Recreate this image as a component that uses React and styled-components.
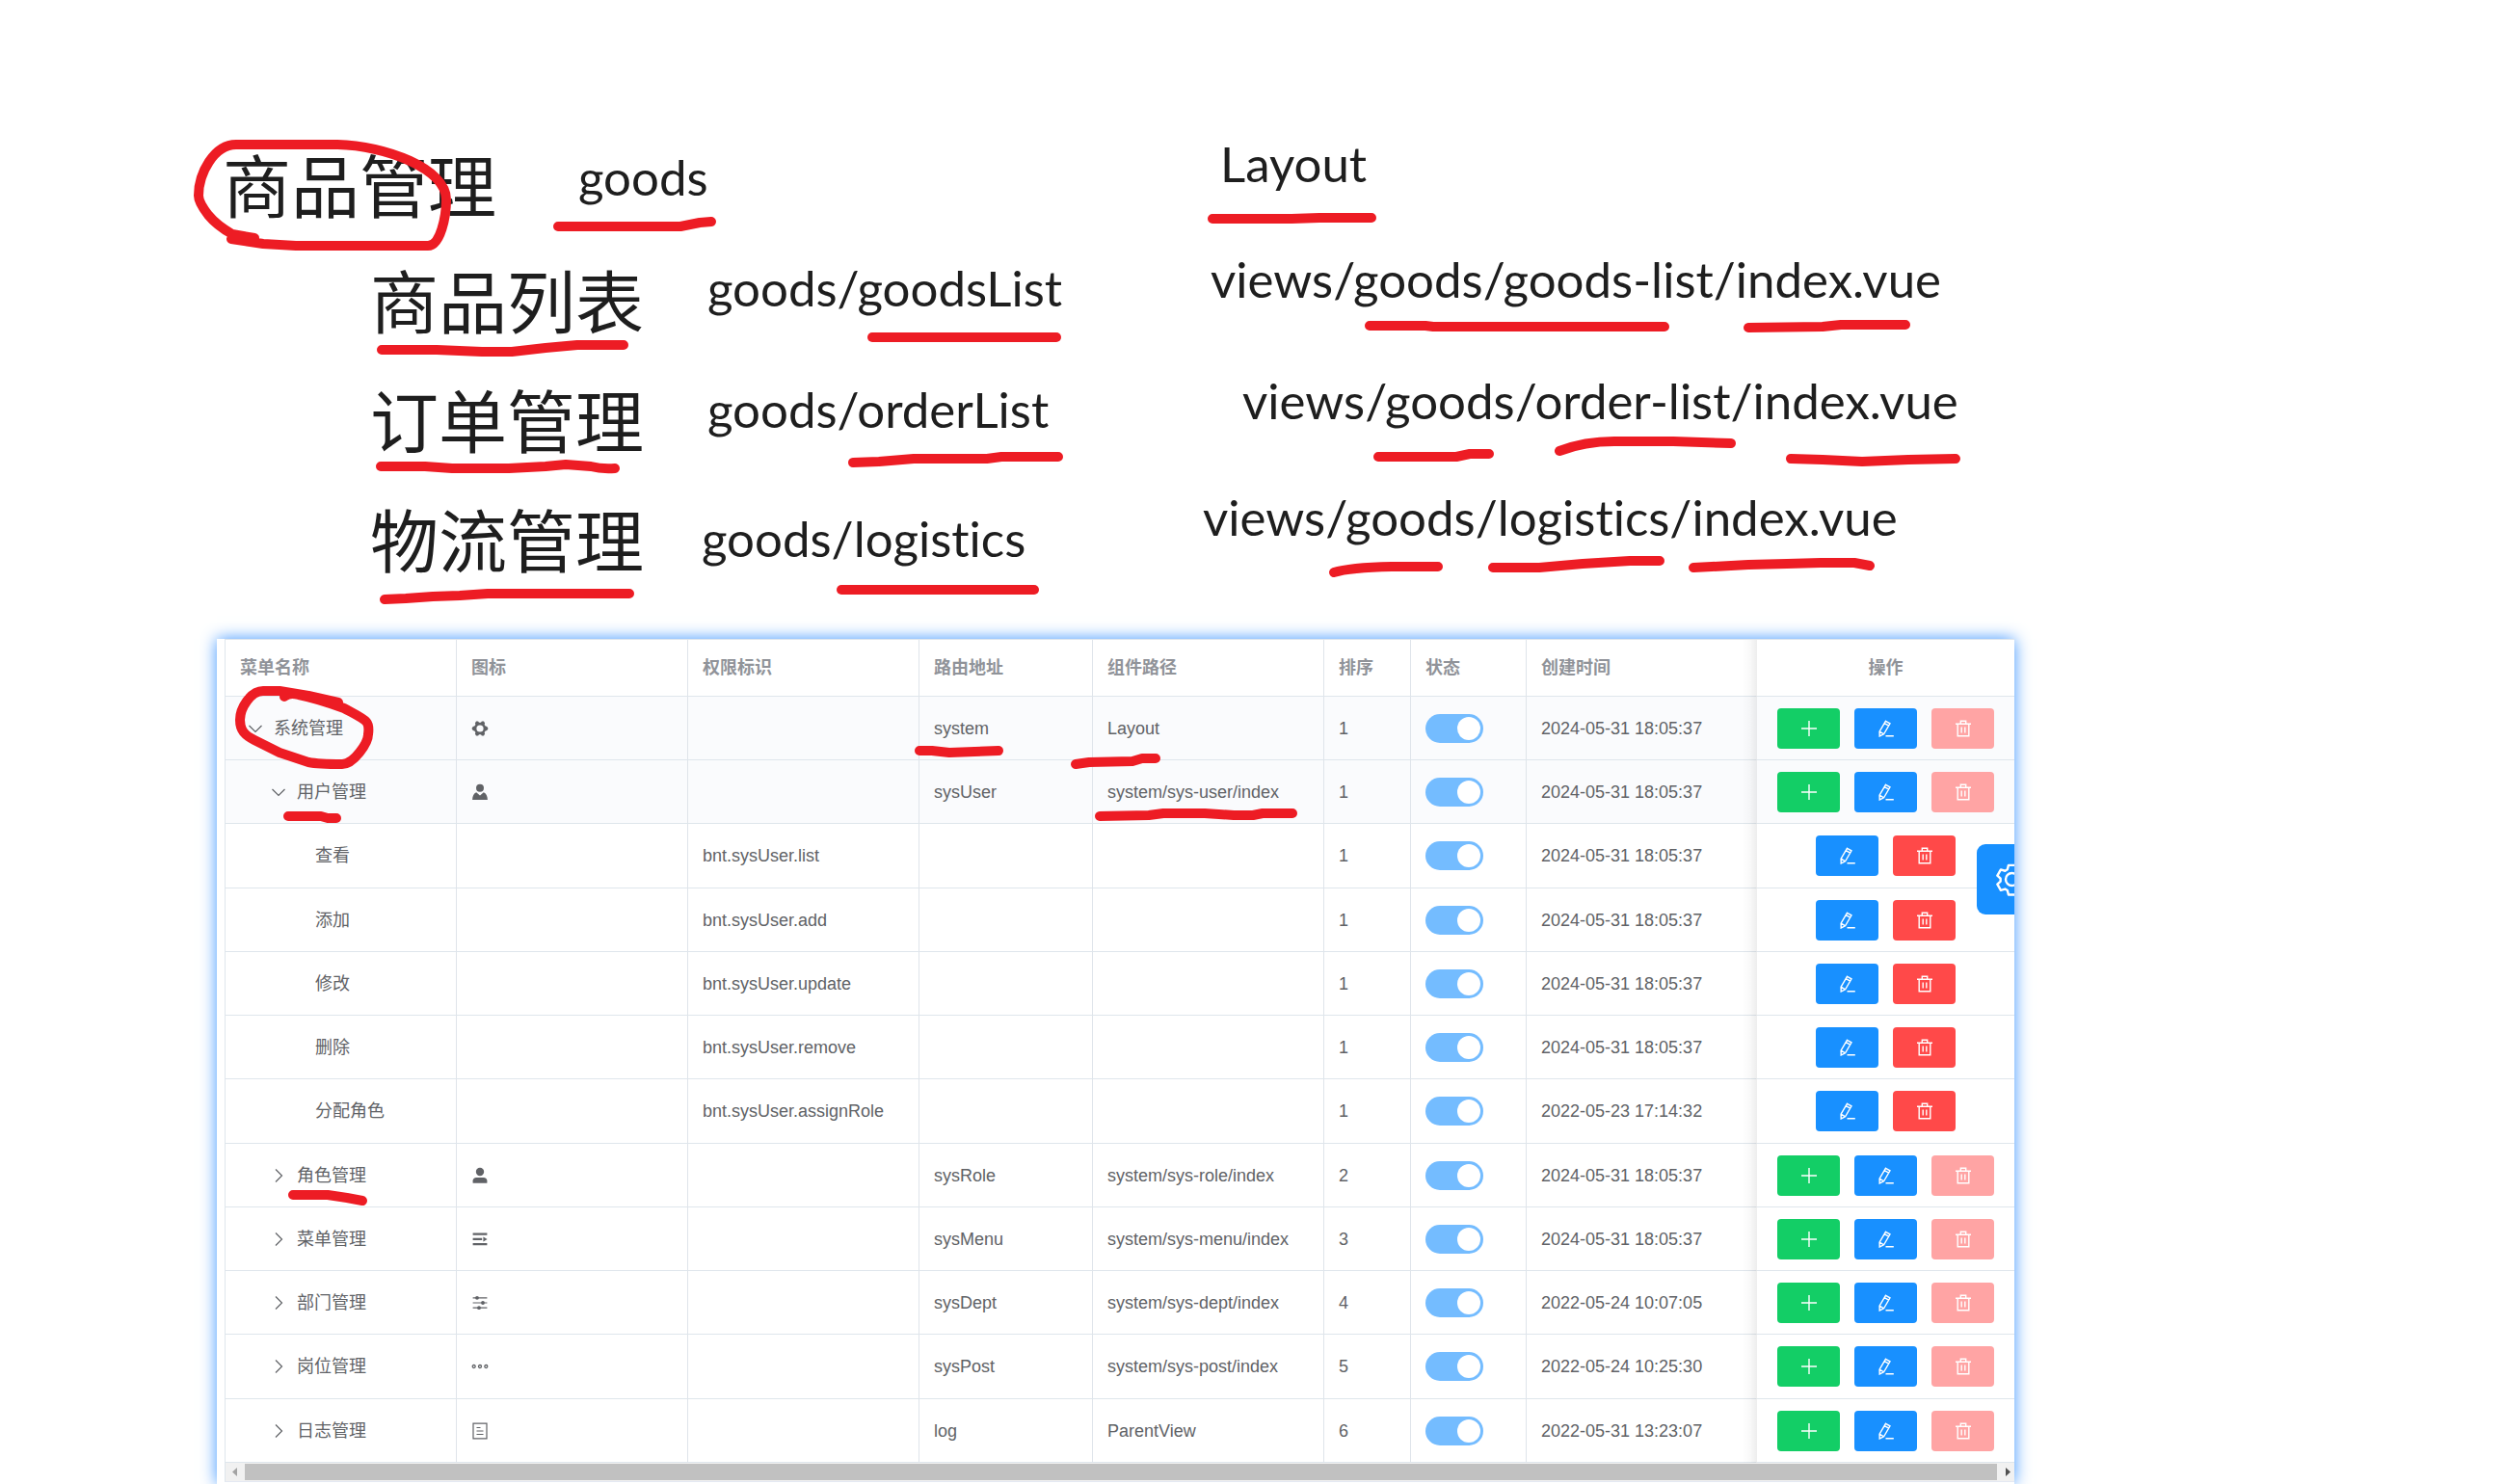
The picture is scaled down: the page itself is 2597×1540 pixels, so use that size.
import React from "react";
import styled, { createGlobalStyle, css } from "styled-components";

const Global = createGlobalStyle`
  *, *::before, *::after { box-sizing: border-box; }
  body {
    margin: 0;
    background: #fff;
    color: #606266;
    font-family: "Liberation Sans", "Noto Sans CJK SC", sans-serif;
    font-size: 18px;
    line-height: 28px;
  }
`;

const Board = styled.main`
  position: relative;
  min-height: 100vh;
  overflow: hidden;
`;

const Notes = styled.section`
  position: relative;
  height: 663px;
`;

const Note = styled.p`
  position: absolute;
  left: ${(p) => p.$x}px;
  top: ${(p) => p.$y}px;
  margin: 0;
  white-space: nowrap;
  color: #1e1e1e;
`;

const TitleNote = styled(Note)`
  font-family: "Noto Sans CJK SC", sans-serif;
  font-size: 71px;
  font-weight: 400;
  line-height: 90px;
`;

const PathNote = styled(Note)`
  font-family: Lato, sans-serif;
  font-size: 51px;
  line-height: 60px;
  font-variant-ligatures: none;
`;

const Ink = styled.svg`
  position: absolute;
  inset: 0;
  width: 100%;
  height: 100%;
  pointer-events: none;
  fill: none;
  stroke: #ed1c24;
  stroke-width: 10px;
  stroke-linecap: round;
  stroke-linejoin: round;
`;

const Panel = styled.section`
  position: relative;
  width: calc(100% - 225px);
  max-width: 1865px;
  margin-left: 225px;
`;

const Sheet = styled.div`
  position: relative;
  padding: 0 0 2px 8px;
  overflow: hidden;
  background: #fff;
`;

const Glow = styled.div`
  box-shadow: 0 0 16px #3d94ff;
`;

const Table = styled.table`
  width: 100%;
  table-layout: fixed;
  border-collapse: separate;
  border-spacing: 0;
  border-top: 1px solid #dfe6ec;
  border-left: 1px solid #dfe6ec;
`;

const Col = styled.col`
  width: ${(p) => p.$w}px;
`;

const cell = css`
  padding: 0 15px;
  border-right: 1px solid #dfe4ea;
  border-bottom: 1px solid #dfe6ec;
  text-align: left;
  white-space: nowrap;
`;

const pinned = css`
  position: relative;
  padding: 0;
  border-right: 0;
  text-align: center;
  &::before {
    content: "";
    position: absolute;
    top: 0;
    bottom: -1px;
    left: -16px;
    width: 16px;
    background: linear-gradient(to left, rgba(0, 0, 0, 0.07), rgba(0, 0, 0, 0.02) 50%, transparent);
  }
`;

const Th = styled.th`
  ${cell}
  height: 59px;
  color: #909399;
  font-weight: 700;
  ${(p) => p.$flush && "border-right-color: transparent;"}
  ${(p) => p.$pinned && pinned}
`;

const Td = styled.td`
  ${cell}
  ${(p) => p.$flush && "border-right-color: transparent;"}
  ${(p) => p.$pinned && pinned}
`;

const Tr = styled.tr`
  height: 66px;
  background: ${(p) => (p.$tint ? "#fafbfd" : "#fff")};
  &:nth-child(4n + 3) {
    height: 67px;
  }
`;

const Name = styled.div`
  display: flex;
  align-items: center;
  gap: 3px;
  padding-left: ${(p) => p.$level * 24}px;
`;

const LeafName = styled.div`
  padding-left: 78px;
`;

const Toggle = styled.button`
  display: flex;
  justify-content: center;
  width: 32px;
  padding: 0;
  border: 0;
  background: none;
  color: inherit;
  svg {
    width: 16px;
    height: 16px;
    transform: rotate(${(p) => (p["aria-expanded"] ? 90 : 0)}deg);
  }
`;

const RowIcon = styled.svg`
  display: block;
  width: 18px;
  height: 18px;
`;

const Switch = styled.input`
  appearance: none;
  display: block;
  width: 60px;
  height: 30px;
  margin: 0;
  padding: 3px;
  border-radius: 15px;
  background: #74bcff;
  &::before {
    content: "";
    display: block;
    width: 24px;
    height: 24px;
    margin-left: auto;
    border-radius: 50%;
    background: #fff;
  }
`;

const Actions = styled.div`
  display: flex;
  justify-content: center;
  gap: 15px;
`;

const tones = { add: "#13ce66", edit: "#1890ff", remove: "#ff4949" };

const Action = styled.button`
  display: grid;
  place-items: center;
  width: 65px;
  height: 42px;
  padding: 0;
  border: 0;
  border-radius: 4px;
  color: #fff;
  background: ${(p) => tones[p.$tone]};
  svg {
    width: 18px;
    height: 18px;
  }
  &:disabled {
    background: #ffa4a4;
  }
`;

const Scroller = styled.div`
  display: flex;
  align-items: center;
  height: 20px;
  border-left: 1px solid #dfe6ec;
  border-bottom: 1px solid #e4e8f2;
  background: #f1f1f1;
`;

const Thumb = styled.div`
  flex: 1;
  height: 17px;
  background: #c1c1c1;
`;

const Arrow = styled.svg`
  width: ${(p) => p.$w}px;
  height: 17px;
  fill: ${(p) => p.$c};
`;

const Settings = styled.button`
  position: absolute;
  top: 213px;
  right: -33px;
  display: grid;
  place-items: center;
  width: 72px;
  height: 73px;
  padding: 0;
  border: 0;
  border-radius: 9px;
  background: #1890ff;
  color: #fff;
  svg {
    width: 39px;
    height: 39px;
  }
`;

const gear =
  "M9.8 3h4.4l.7 2.7 1.5.9 2.7-.8 2.2 3.8-2 1.9v1.8l2 1.9-2.2 3.8-2.7-.8-1.5.9-.7 2.700H9.800l-.7-2.700-1.500-.9-2.700.8-2.200-3.800 2-1.900v-1.800l-2-1.900 2.200-3.800 2.700.8 1.500-.9z";

const rowIcons = {
  tools: (
    <g>
      <path fill="currentColor" d="M5 1.6h2.1L8 2.7h2l.9-1.1H13l1.1 1.8-.5 1.5 1.1 1.7 1.6.4L17.500 9l-1.200 2-1.600.4-1.100 1.700.5 1.500-1.100 1.800h-2.100L10 15.300H8l-.9 1.100H5l-1.100-1.800.5-1.500-1.100-1.700L1.700 11 .5 9l1.200-2 1.600-.4 1.100-1.700-.5-1.500z" />
      <circle cx="9" cy="9" r="3.6" fill="#fafbfd" />
    </g>
  ),
  custom: (
    <g fill="currentColor">
      <circle cx="9" cy="4.7" r="4" />
      <path d="M5.200 9.300 9 12.500l3.800-3.200c2.500 1 4 3.700 4.100 7.700H1.100c.1-4 1.600-6.700 4.100-7.700z" />
      <path fill="#fff" d="M8.200 9.600h1.600l-.8 2.600z" />
    </g>
  ),
  user: (
    <g fill="currentColor">
      <circle cx="9" cy="5" r="4.200" />
      <path d="M1.600 16.700v-2.400c0-2 1.600-3.300 3.600-3.300h7.600c2 0 3.600 1.300 3.600 3.300v2.400z" />
    </g>
  ),
  fold: (
    <g fill="currentColor">
      <path d="M1.600 2.500h14.800v2.300H1.600zM1.600 7.800h9.600v2.300H1.600zM12.400 6.400 16.600 9l-4.200 2.600zM1.600 13h14.800v2.300H1.600z" />
    </g>
  ),
  operation: (
    <g fill="currentColor">
      <path d="M1.600 3.200h14.800v1.200H1.600zM1.600 8.400h14.800v1.200H1.600zM1.600 13.600h14.800v1.200H1.600z" />
      <circle cx="6" cy="3.800" r="1.900" />
      <circle cx="12" cy="9" r="1.900" />
      <circle cx="8" cy="14.200" r="1.900" />
    </g>
  ),
  more: (
    <g fill="none" stroke="currentColor" strokeWidth="1.300">
      <circle cx="2.700" cy="9" r="1.500" />
      <circle cx="9" cy="9" r="1.500" />
      <circle cx="15.300" cy="9" r="1.500" />
    </g>
  ),
  tickets: (
    <path fill="none" stroke="currentColor" strokeWidth="1.200" d="M2 1.200h14v15.600H2zM5.500 5.500h4M5.500 9h7M5.500 12.500h7" />
  ),
};

const actionIcons = {
  add: <path d="M9 1v16M1 9h16" />,
  edit: <path d="M8.500 1.300 13 3.800 6.600 14.800 2.200 17l-.1-4.800zM7.200 3.600l4.500 2.600M2.100 12.200l4.500 2.600M8.500 16.800h8.300" />,
  remove: <path d="M1 4.200h16M3.200 4.200v12.600h11.600V4.200M6.300 4V1.300h5.400V4M7.200 7.500v6M10.800 7.500v6" />,
};

const actionLabels = { add: "新增", edit: "编辑", remove: "删除" };

function ActionButton({ tone, disabled }) {
  return (
    <Action type="button" $tone={tone} disabled={disabled} aria-label={actionLabels[tone]}>
      <svg viewBox="0 0 18 18" fill="none" stroke="currentColor" strokeWidth="1.400">
        {actionIcons[tone]}
      </svg>
    </Action>
  );
}

const titles = [
  [231, 144, "商品管理"],
  [384, 264, "商品列表"],
  [384, 388, "订单管理"],
  [384, 512, "物流管理"],
];

const paths = [
  [600, 154, "goods"],
  [734, 269, "goods/goodsList"],
  [734, 395, "goods/orderList"],
  [728, 529, "goods/logistics"],
  [1266, 140, "Layout"],
  [1256, 260, "views/goods/goods-list/index.vue"],
  [1289, 386, "views/goods/order-list/index.vue"],
  [1248, 507, "views/goods/logistics/index.vue"],
];

const strokes = [
  "M264 247 241 243Q225 234 216 223Q206 210 206 203C206 180 222 150 245 150H350C400 151 463 175 463 207C463 225 457 255 444 255H307L273 253 240 248",
  "M579 235H706L726 231 738 230",
  "M396 363H453L500 365H531L566 361 599 358H647",
  "M395 484H441L469 486H528L566 484 587 482 613 484Q624 487 638 486",
  "M399 622 421 621 449 619 477 618 506 616H653",
  "M905 350H1096",
  "M885 480 912 479 948 476H1024L1039 474H1098",
  "M873 612H1073",
  "M1258 227H1340L1369 226H1423",
  "M1421 338H1479L1487 339H1727",
  "M1814 340 1891 339 1910 337H1977",
  "M1430 474H1511L1525 471H1545",
  "M1618 468Q1644 458 1675 458H1736L1796 460",
  "M1858 476 1891 477 1932 479 1980 477 2029 476",
  "M1384 594Q1400 589 1444 588H1492",
  "M1549 589H1597L1642 585 1691 582H1722",
  "M1757 589 1776 588 1814 586 1854 585 1889 584H1924L1940 587",
  "M351 729 320 722 290 717H273C260 717 249 735 249 747C249 758 254 763 264 768L290 781 320 791Q330 793 355 793C367 793 382 771 382 762C384 748 381 748 357 735Q330 725 310 721 300 718 295 723",
  "M299 847H333L340 849H349",
  "M954 779H967L985 781 1036 779",
  "M1116 793 1130 791 1175 790 1185 787H1199",
  "M1141 847 1192 846 1207 844H1250L1280 846H1300L1310 844H1341",
  "M304 1240H340L360 1243 376 1246",
];

const columns = [
  ["菜单名称", 240],
  ["图标", 240],
  ["权限标识", 240],
  ["路由地址", 180],
  ["组件路径", 240],
  ["排序", 90],
  ["状态", 120],
  ["创建时间", 239],
];

const rows = [
  { level: 0, open: true, name: "系统管理", icon: "tools", route: "system", comp: "Layout", sort: 1, time: "2024-05-31 18:05:37" },
  { level: 1, open: true, name: "用户管理", icon: "custom", route: "sysUser", comp: "system/sys-user/index", sort: 1, time: "2024-05-31 18:05:37" },
  { leaf: true, name: "查看", perm: "bnt.sysUser.list", sort: 1, time: "2024-05-31 18:05:37" },
  { leaf: true, name: "添加", perm: "bnt.sysUser.add", sort: 1, time: "2024-05-31 18:05:37" },
  { leaf: true, name: "修改", perm: "bnt.sysUser.update", sort: 1, time: "2024-05-31 18:05:37" },
  { leaf: true, name: "删除", perm: "bnt.sysUser.remove", sort: 1, time: "2024-05-31 18:05:37" },
  { leaf: true, name: "分配角色", perm: "bnt.sysUser.assignRole", sort: 1, time: "2022-05-23 17:14:32" },
  { level: 1, name: "角色管理", icon: "user", route: "sysRole", comp: "system/sys-role/index", sort: 2, time: "2024-05-31 18:05:37" },
  { level: 1, name: "菜单管理", icon: "fold", route: "sysMenu", comp: "system/sys-menu/index", sort: 3, time: "2024-05-31 18:05:37" },
  { level: 1, name: "部门管理", icon: "operation", route: "sysDept", comp: "system/sys-dept/index", sort: 4, time: "2022-05-24 10:07:05" },
  { level: 1, name: "岗位管理", icon: "more", route: "sysPost", comp: "system/sys-post/index", sort: 5, time: "2022-05-24 10:25:30" },
  { level: 1, name: "日志管理", icon: "tickets", route: "log", comp: "ParentView", sort: 6, time: "2022-05-31 13:23:07" },
];

function MenuRow({ row }) {
  return (
    <Tr $tint={row.open}>
      <Td>
        {row.leaf ? (
          <LeafName>{row.name}</LeafName>
        ) : (
          <Name $level={row.level}>
            <Toggle type="button" aria-expanded={!!row.open} aria-label={row.name}>
              <svg viewBox="0 0 16 16" fill="none" stroke="currentColor" strokeWidth="1.200">
                <path d="M5 1.500 11.500 8 5 14.500" />
              </svg>
            </Toggle>
            {row.name}
          </Name>
        )}
      </Td>
      <Td>{row.icon && <RowIcon viewBox="0 0 18 18">{rowIcons[row.icon]}</RowIcon>}</Td>
      <Td>{row.perm}</Td>
      <Td>{row.route}</Td>
      <Td>{row.comp}</Td>
      <Td>{row.sort}</Td>
      <Td>
        <Switch type="checkbox" role="switch" defaultChecked disabled aria-label={`${row.name} 状态`} />
      </Td>
      <Td $flush>{row.time}</Td>
      <Td $pinned>
        <Actions>
          {!row.leaf && <ActionButton tone="add" />}
          <ActionButton tone="edit" />
          <ActionButton tone="remove" disabled={!row.leaf} />
        </Actions>
      </Td>
    </Tr>
  );
}

export default function App() {
  return (
    <Board>
      <Global />
      <Notes>
        {titles.map(([x, y, text]) => (
          <TitleNote key={text} $x={x} $y={y}>{text}</TitleNote>
        ))}
        {paths.map(([x, y, text]) => (
          <PathNote key={text} $x={x} $y={y}>{text}</PathNote>
        ))}
      </Notes>
      <Panel>
        <Glow>
          <Sheet>
            <Table>
              <colgroup>
                {columns.map(([label, w]) => <Col key={label} $w={w} />)}
                <col />
              </colgroup>
              <thead>
                <tr>
                  {columns.map(([label]) => (
                    <Th key={label} scope="col" $flush={label === "创建时间"}>{label}</Th>
                  ))}
                  <Th scope="col" $pinned>操作</Th>
                </tr>
              </thead>
              <tbody>
                {rows.map((row) => <MenuRow key={row.name} row={row} />)}
              </tbody>
            </Table>
            <Scroller>
              <Arrow $w={20} $c="#a3a3a3" viewBox="0 0 20 17"><path d="M12 4v9L7 8.500z" /></Arrow>
              <Thumb />
              <Arrow $w={18} $c="#505050" viewBox="0 0 18 17"><path d="M9 4v9l5-4.500z" /></Arrow>
            </Scroller>
            <Settings type="button" aria-label="设置">
              <svg viewBox="0 0 24 24" fill="none" stroke="currentColor" strokeWidth="1.500" strokeLinejoin="round">
                <path d={gear} />
                <circle cx="12" cy="12" r="4" />
              </svg>
            </Settings>
          </Sheet>
        </Glow>
      </Panel>
      <Ink aria-hidden="true">
        {strokes.map((d) => <path key={d} d={d} />)}
      </Ink>
    </Board>
  );
}
